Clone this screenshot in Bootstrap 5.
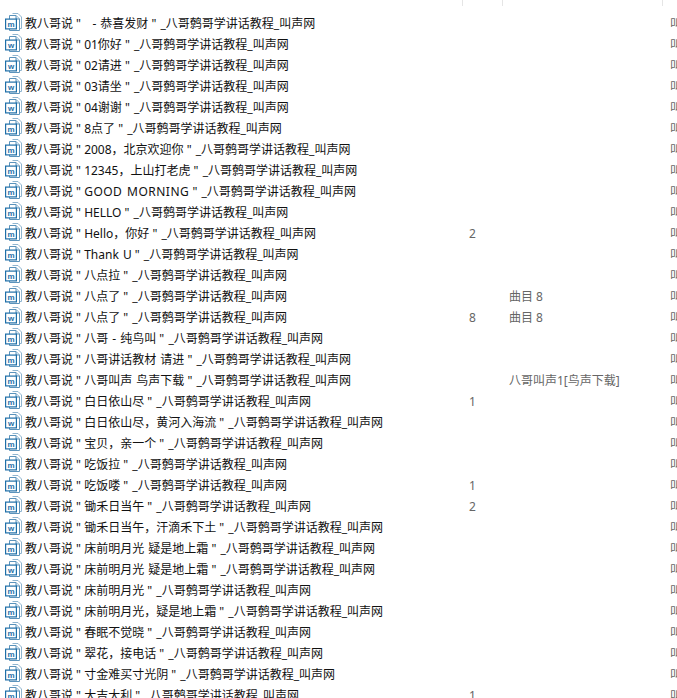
<!DOCTYPE html>
<html lang="zh-CN">
<head>
    <meta charset="UTF-8">
    <meta name="viewport" content="width=device-width, initial-scale=1.0">
    <title>教八哥说</title>
    <link href="https://cdn.jsdelivr.net/npm/bootstrap@5.3.0/dist/css/bootstrap.min.css" rel="stylesheet">
    <style>
        html, body { height: 698px; overflow: hidden; background: #fff; }
        body { font-family: "Noto Sans", "Noto Sans CJK SC", sans-serif; font-size: 12px; }
        .col-marks { height: 6px; }
        .col-mark { position: absolute; top: 0; width: 1px; height: 6px; background: #e5e5e5; }
        .file-list { padding-top: 7px; }
        .file-row { height: 21px; line-height: 21px; white-space: nowrap; }
        .file-icon { width: 17px; height: 18px; margin-left: 5px; margin-right: 3px; flex: none; }
        .file-name { width: 437px; flex: none; color: #111; overflow: hidden; }
        .file-title { word-spacing: 1px; }
        .file-title-wide { letter-spacing: .5px; }
        .file-close { margin-left: 1px; }
        .file-track { width: 40px; flex: none; padding-left: 7px; color: #666; }
        .file-album { width: 168px; flex: none; padding-left: 7px; color: #666; }
        .file-artist { flex: none; width: 7px; overflow: hidden; color: #666; }
    </style>
</head>
<body>
    <div class="col-marks">
        <div class="col-mark" style="left: 462px"></div>
        <div class="col-mark" style="left: 502px"></div>
        <div class="col-mark" style="left: 662px"></div>
    </div>
    <div class="file-list" id="fileList"></div>
    <script>
        let rows = [
            ["&nbsp;&nbsp;- 恭喜发财"],
            ["01你好", "", "", "w"],
            ["02请进", "", "", "w"],
            ["03请坐", "", "", "w"],
            ["04谢谢", "", "", "w"],
            ["8点了"],
            ["2008，北京欢迎你"],
            ["12345，上山打老虎"],
            ['<span class="file-title-wide">GOOD MORNING</span>'],
            ["HELLO"],
            ["Hello，你好", "2"],
            ["Thank U"],
            ["八点拉"],
            ["八点了", "", "曲目 8"],
            ["八点了", "8", "曲目 8", "w"],
            ["八哥 - 纯鸟叫"],
            ["八哥讲话教材 请进"],
            ["八哥叫声 鸟声下载", "", "八哥叫声1[鸟声下载]"],
            ["白日依山尽", "1"],
            ["白日依山尽，黄河入海流", "", "", "w"],
            ["宝贝，亲一个"],
            ["吃饭拉"],
            ["吃饭喽", "1"],
            ["锄禾日当午", "2"],
            ["锄禾日当午，汗滴禾下土", "", "", "w"],
            ["床前明月光 疑是地上霜"],
            ["床前明月光 疑是地上霜", "", "", "w"],
            ["床前明月光"],
            ["床前明月光，疑是地上霜"],
            ["春眠不觉晓"],
            ["翠花，接电话"],
            ["寸金难买寸光阴"],
            ["大吉大利", "1"]
        ];

        function fileIcon(letter) {
            return `<svg class="file-icon" viewBox="0 0 17 18">
                <path d="M7.500 .5h5.500l3.500 3.500v11.500h-2" fill="#fff" stroke="#8fb5d0"/>
                <path d="M4.500 2.500h6.500l3.500 3.500v11.500h-10z" fill="#fff" stroke="#5b93bb"/>
                <path d="M11 2.500v3.500h3.500" fill="#dbe9f3" stroke="#5b93bb"/>
                <rect x=".6" y="6.100" width="10.800" height="9.800" fill="#fff" stroke="#1f6fa8" stroke-width="1.200"/>
                <text x="6" y="14" text-anchor="middle" font-family="Liberation Sans, sans-serif" font-size="8" font-weight="700" fill="#1f6fa8">${letter}</text>
            </svg>`;
        }

        document.getElementById("fileList").innerHTML = rows.map(r => `
            <div class="file-row d-flex">
                ${fileIcon(r[3] || "m")}
                <div class="file-name">教八哥说 " <span class="file-title">${r[0]}</span> "<span class="file-close"> </span>_八哥鹩哥学讲话教程_叫声网</div>
                <div class="file-track">${r[1] || ""}</div>
                <div class="file-album">${r[2] || ""}</div>
                <div class="file-artist">叫</div>
            </div>`).join("");
    </script>
    <script src="https://cdn.jsdelivr.net/npm/bootstrap@5.3.0/dist/js/bootstrap.bundle.min.js"></script>
</body>
</html>
